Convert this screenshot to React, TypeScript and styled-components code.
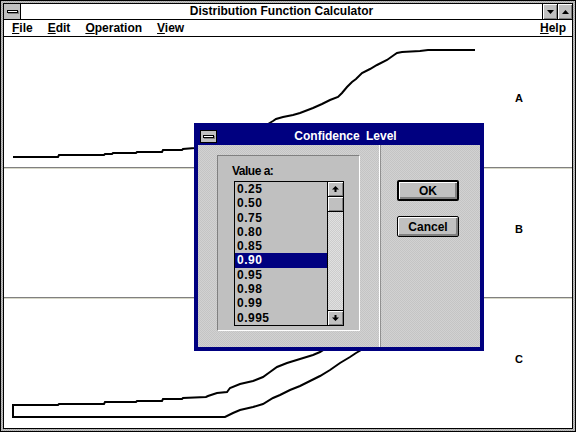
import React from 'react';
import styled, { createGlobalStyle } from 'styled-components';

const Global = createGlobalStyle`
  html, body { margin: 0; padding: 0; background: #c0c0c0; }
  body { width: 576px; height: 432px; overflow: hidden; }
`;

const Frame = styled.div`
  position: relative;
  box-sizing: border-box;
  width: 576px;
  height: 432px;
  border: 1px solid #000;
  padding: 2px;
  background-color: #c0c0c0;
  background-image: repeating-conic-gradient(#c0c0c0 0 25%, #a8a8a8 0 50%);
  background-size: 2px 2px;
  display: flex;
  flex-direction: column;
  font-family: "Liberation Sans", Arial, sans-serif;
`;

const AppWindow = styled.div`
  flex: 1;
  min-height: 0;
  display: flex;
  flex-direction: column;
  border: 1px solid #000;
  background: #fff;
`;

const TitleBar = styled.div`
  height: 15px;
  display: flex;
  align-items: stretch;
  border-bottom: 1px solid #000;
  background: #fff;
`;

const SysBox = styled.div`
  width: 16px;
  border-right: 1px solid #000;
  background: #c0c0c0;
  display: flex;
  align-items: center;
  justify-content: center;
`;

const SysDash = styled.div`
  width: 9px;
  height: 1px;
  background: #fff;
  border: 1px solid #000;
  box-shadow: 1px 1px 0 #808080;
`;

const Caption = styled.div<{ $active?: boolean }>`
  flex: 1;
  text-align: center;
  font-weight: bold;
  font-size: 12px;
  line-height: ${(p) => (p.$active ? '18px' : '15px')};
  color: ${(p) => (p.$active ? '#fff' : '#000')};
  word-spacing: ${(p) => (p.$active ? '3px' : '0')};
  padding-right: ${(p) => (p.$active ? '6px' : '0')};
  white-space: nowrap;
`;

const SizeButton = styled.div`
  width: 14px;
  border-left: 1px solid #000;
  background: #c0c0c0;
  box-shadow: inset 1px 1px 0 #fff, inset -1px -1px 0 #808080;
  display: flex;
  align-items: center;
  justify-content: center;
`;

const MenuBar = styled.div`
  height: 16px;
  display: flex;
  align-items: center;
  gap: 15px;
  padding: 0 6px 0 8px;
  border-bottom: 1px solid #000;
  font-weight: bold;
  font-size: 12px;
  line-height: 16px;
  color: #000;
`;

const MenuItem = styled.span<{ $right?: boolean }>`
  margin-left: ${(p) => (p.$right ? 'auto' : '0')};
  white-space: nowrap;
  u { text-decoration: underline; text-underline-offset: 1px; }
`;

const Client = styled.div`
  flex: 1;
  min-height: 0;
  display: flex;
  flex-direction: column;
  background: #fff;
`;

const Panel = styled.div<{ $h: number }>`
  height: ${(p) => p.$h}px;
  display: flex;
  align-items: stretch;
`;

const PanelDivider = styled.div`
  height: 1px;
  border-top: 1px solid #808080;
  background: #d8d8c8;
`;

const Plot = styled.svg`
  width: 507px;
  height: 100%;
  display: block;
  flex: none;
`;

const PanelLabel = styled.div`
  flex: 1;
  display: flex;
  align-items: center;
  padding: 0 0 8px 4px;
  font-weight: bold;
  font-size: 11px;
  line-height: 13px;
  color: #000;
`;

const Dialog = styled.div`
  position: absolute;
  left: 193px;
  top: 122px;
  width: 290px;
  height: 228px;
  box-sizing: border-box;
  border: 4px solid #000080;
  display: flex;
  flex-direction: column;
`;

const DialogTitle = styled.div`
  height: 18px;
  display: flex;
  align-items: center;
  background: #000080;
`;

const DialogSysBox = styled.div`
  width: 17px;
  height: 13px;
  margin-left: 2px;
  background: #c0c0c0;
  border: 1px solid #000;
  box-sizing: border-box;
  display: flex;
  align-items: center;
  justify-content: center;
`;

const DialogBody = styled.div`
  flex: 1;
  display: flex;
  background-color: #c8c8c8;
  background-image: repeating-conic-gradient(#c4c4c4 0 25%, #d2d2d2 0 50%);
  background-size: 2px 2px;
`;

const LeftPane = styled.div`
  width: 181px;
  box-sizing: border-box;
  padding: 10px 19px 16px 19px;
  display: flex;
`;

const VSeparator = styled.div`
  width: 1px;
  border-left: 1px solid #fff;
  background: #909090;
`;

const RightPane = styled.div`
  flex: 1;
  display: flex;
  flex-direction: column;
  gap: 15px;
  padding: 35px 0 0 16px;
`;

const GroupPanel = styled.div`
  flex: 1;
  display: flex;
  flex-direction: column;
  background: #c0c0c0;
  border-top: 1px solid #808080;
  border-left: 1px solid #808080;
  border-bottom: 1px solid #fff;
  border-right: 1px solid #fff;
  padding: 8px 0 0 14px;
`;

const FieldLabel = styled.div`
  font-weight: bold;
  font-size: 12px;
  line-height: 14px;
  letter-spacing: -0.5px;
  color: #000;
`;

const ListBox = styled.div`
  margin: 3px 0 0 2px;
  width: 110px;
  height: 145px;
  box-sizing: border-box;
  border: 1px solid #000;
  display: flex;
  background: #c0c0c0;
`;

const List = styled.div`
  flex: 1;
  display: flex;
  flex-direction: column;
`;

const Item = styled.div<{ $selected?: boolean }>`
  height: 14.3px;
  line-height: 14.3px;
  padding-left: 2px;
  font-weight: bold;
  font-size: 12px;
  letter-spacing: 0.5px;
  color: ${(p) => (p.$selected ? '#fff' : '#000')};
  background: ${(p) => (p.$selected ? '#000080' : 'transparent')};
`;

const ScrollBar = styled.div`
  width: 15px;
  border-left: 1px solid #000;
  display: flex;
  flex-direction: column;
  background-color: #d4d4d4;
  background-image: repeating-conic-gradient(#cccccc 0 25%, #e0e0e0 0 50%);
  background-size: 2px 2px;
`;

const ScrollButton = styled.div<{ $bottom?: boolean }>`
  height: 14px;
  background: #c0c0c0;
  box-shadow: inset 1px 1px 0 #fff, inset -1px -1px 0 #808080;
  border-top: ${(p) => (p.$bottom ? '1px solid #000' : 'none')};
  border-bottom: ${(p) => (p.$bottom ? 'none' : '1px solid #000')};
  display: flex;
  align-items: center;
  justify-content: center;
`;

const Thumb = styled.div`
  height: 14px;
  background: #c0c0c0;
  box-shadow: inset 1px 1px 0 #fff, inset -1px -1px 0 #808080;
  border-bottom: 1px solid #000;
`;

const Track = styled.div`
  flex: 1;
`;

const PushButton = styled.div<{ $default?: boolean }>`
  width: 62px;
  height: 21px;
  box-sizing: border-box;
  border: ${(p) => (p.$default ? '2px' : '1px')} solid #000;
  border-radius: 2px;
  background: #c0c0c0;
  box-shadow: inset 1px 1px 0 #fff, inset -2px -2px 0 #808080;
  display: flex;
  align-items: center;
  justify-content: center;
  font-weight: bold;
  font-size: 12px;
  color: #000;
`;

type Pt = [number, number];

const curveA: Pt[] = [
  [13, 157], [58, 157], [59, 155], [104, 155], [105, 154], [112, 154], [113, 153], [136, 153],
  [137, 152], [162, 152], [163, 150], [182, 150], [183, 149], [195, 148], [215, 145], [235, 139],
  [255, 131], [268, 124], [273, 121], [276, 119], [283, 117], [293, 115], [300, 113], [313, 108],
  [322, 104], [330, 100], [338, 97], [342, 93], [347, 87], [352, 82], [356, 79], [362, 73],
  [370, 69], [377, 65], [387, 60], [394, 55], [397, 53], [402, 52], [420, 51], [428, 50], [475, 50],
];

const curveCUpper: Pt[] = [
  [325, 349], [320, 352], [313, 355], [300, 359], [287, 363], [277, 367], [270, 372], [263, 377],
  [253, 381], [240, 384], [230, 388], [227, 392], [217, 393], [208, 396], [206, 397], [183, 398],
  [182, 399], [163, 399], [162, 401], [137, 401], [136, 402], [105, 402], [104, 404], [59, 404],
  [58, 405], [13, 405],
];

const curveCLower: Pt[] = [
  [13, 417], [225, 417], [233, 413], [240, 410], [253, 407], [263, 404], [273, 398], [280, 395],
  [290, 390], [300, 386], [320, 376], [330, 370], [340, 363], [350, 357], [356, 353], [363, 349],
];

const toPoints = (pts: Pt[]) => pts.map(([x, y]) => `${x},${y}`).join(' ');

const PlotArea: React.FC<{ top: number; curves: Pt[][] }> = ({ top, curves }) => (
  <Plot>
    <g transform={`translate(-4,${-top})`}>
      {curves.map((c, i) => (
        <polyline key={i} points={toPoints(c)} fill="none" stroke="#000" strokeWidth={2} strokeLinejoin="miter" />
      ))}
    </g>
  </Plot>
);

const DownTri = () => (
  <svg width="7" height="4" viewBox="0 0 7 4"><polygon points="0,0 7,0 3.5,4" fill="#000" /></svg>
);
const UpTri = () => (
  <svg width="7" height="4" viewBox="0 0 7 4"><polygon points="0,4 7,4 3.5,0" fill="#000" /></svg>
);
const UpArrow = () => (
  <svg width="7" height="6" viewBox="0 0 7 6"><polygon points="3.5,0 7,3.5 4.5,3.5 4.5,6 2.5,6 2.5,3.5 0,3.5" fill="#000" /></svg>
);
const DownArrow = () => (
  <svg width="7" height="6" viewBox="0 0 7 6"><polygon points="3.5,6 7,2.5 4.5,2.5 4.5,0 2.5,0 2.5,2.5 0,2.5" fill="#000" /></svg>
);

const values = ['0.25', '0.50', '0.75', '0.80', '0.85', '0.90', '0.95', '0.98', '0.99', '0.995'];

export default function App() {
  return (
    <>
      <Global />
      <Frame>
        <AppWindow>
          <TitleBar>
            <SysBox><SysDash /></SysBox>
            <Caption>Distribution Function Calculator</Caption>
            <SizeButton><DownTri /></SizeButton>
            <SizeButton><UpTri /></SizeButton>
          </TitleBar>
          <MenuBar>
            <MenuItem><u>F</u>ile</MenuItem>
            <MenuItem><u>E</u>dit</MenuItem>
            <MenuItem><u>O</u>peration</MenuItem>
            <MenuItem><u>V</u>iew</MenuItem>
            <MenuItem $right><u>H</u>elp</MenuItem>
          </MenuBar>
          <Client>
            <Panel $h={130}>
              <PlotArea top={37} curves={[curveA]} />
              <PanelLabel>A</PanelLabel>
            </Panel>
            <PanelDivider />
            <Panel $h={128}>
              <PlotArea top={169} curves={[]} />
              <PanelLabel>B</PanelLabel>
            </Panel>
            <PanelDivider />
            <Panel $h={129}>
              <PlotArea top={299} curves={[[...curveCUpper, ...curveCLower]]} />
              <PanelLabel>C</PanelLabel>
            </Panel>
          </Client>
        </AppWindow>

        <Dialog>
          <DialogTitle>
            <DialogSysBox><SysDash /></DialogSysBox>
            <Caption $active>Confidence Level</Caption>
          </DialogTitle>
          <DialogBody>
            <LeftPane>
              <GroupPanel>
                <FieldLabel>Value a:</FieldLabel>
                <ListBox>
                  <List>
                    {values.map((v) => (
                      <Item key={v} $selected={v === '0.90'}>{v}</Item>
                    ))}
                  </List>
                  <ScrollBar>
                    <ScrollButton><UpArrow /></ScrollButton>
                    <Thumb />
                    <Track />
                    <ScrollButton $bottom><DownArrow /></ScrollButton>
                  </ScrollBar>
                </ListBox>
              </GroupPanel>
            </LeftPane>
            <VSeparator />
            <RightPane>
              <PushButton $default>OK</PushButton>
              <PushButton>Cancel</PushButton>
            </RightPane>
          </DialogBody>
        </Dialog>
      </Frame>
    </>
  );
}
